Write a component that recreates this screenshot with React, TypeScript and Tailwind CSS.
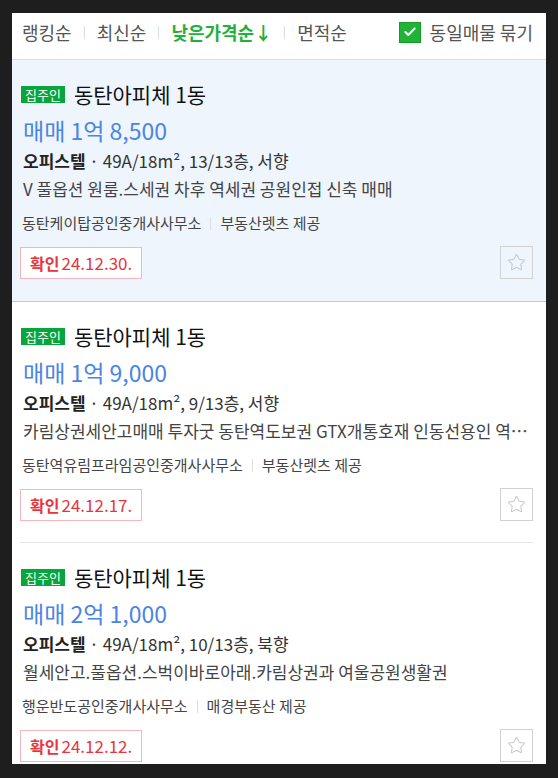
import { Star, Check } from 'lucide-react';

const LISTINGS = [
    {
        name: '동탄아피체 1동',
        price: '매매 1억 8,500',
        spec: '49A/18m², 13/13층, 서향',
        desc: 'V 풀옵션 원룸.스세권 차후 역세권 공원인접 신축 매매',
        agency: '동탄케이탑공인중개사사무소',
        provider: '부동산렛츠 제공',
        date: '24.12.30.',
        active: true,
    },
    {
        name: '동탄아피체 1동',
        price: '매매 1억 9,000',
        spec: '49A/18m², 9/13층, 서향',
        desc: '카림상권세안고매매 투자굿 동탄역도보권 GTX개통호재 인동선용인 역세권 급매',
        agency: '동탄역유림프라임공인중개사사무소',
        provider: '부동산렛츠 제공',
        date: '24.12.17.',
        active: false,
    },
    {
        name: '동탄아피체 1동',
        price: '매매 2억 1,000',
        spec: '49A/18m², 10/13층, 북향',
        desc: '월세안고.풀옵션.스벅이바로아래.카림상권과 여울공원생활권',
        agency: '행운반도공인중개사사무소',
        provider: '매경부동산 제공',
        date: '24.12.12.',
        active: false,
    },
];

const SORTS = ['랭킹순', '최신순', '낮은가격순↓', '면적순'];

type Listing = (typeof LISTINGS)[number];

const Divider = () => <span className="w-px h-[13px] bg-[#dedede]" />;

const ListingCard = ({ item, last }: { item: Listing; last: boolean }) => (
    <div
        className={`relative pl-2 pr-[13px] pt-[22px] pb-[22px] ${
            item.active ? 'bg-[#eef5fd] border-b border-[#b6cbe7]' : 'bg-white'
        }`}
    >
        <div className="flex items-center h-6">
            <span className="h-[17px] px-[4px] flex items-center bg-[#08a43c] text-white text-[13px] leading-none ml-px">
                집주인
            </span>
            <span className="ml-[9px] text-[21px] text-[#111] leading-6">{item.name}</span>
        </div>
        <p className="mt-[9px] pl-[3px] text-[23px] leading-[30px] text-[#4a84e4]">{item.price}</p>
        <p className="mt-[5px] pl-[3px] text-[17px] leading-[22px] text-[#333]">
            <span className="font-bold text-[#222]">오피스텔</span> · {item.spec}
        </p>
        <p className="mt-[5px] pl-[3px] text-[17px] leading-[24px] text-[#444] truncate">{item.desc}</p>
        <div className="mt-[12px] pl-[2px] flex items-center gap-[9px] text-[15px] leading-5 text-[#444]">
            <span>{item.agency}</span>
            <Divider />
            <span>{item.provider}</span>
        </div>
        <div className="mt-[13px] flex items-center justify-between">
            <span className="h-8 px-[9px] flex items-center border border-[#f6b6ba] bg-white text-[#e8353d] text-[17px]">
                <span className="font-bold text-[16px] mr-[2px]">확인</span>
                {item.date}
            </span>
            <button className="w-[33px] h-[33px] flex items-center justify-center border border-[#d2d2d2]">
                <Star size={19} strokeWidth={1.3} className="text-[#c8c8c8]" />
            </button>
        </div>
        {!item.active && !last && (
            <div className="absolute left-2 right-[13px] bottom-0 h-px bg-[#e4e4e4]" />
        )}
    </div>
);

export default function App() {
    return (
        <div
            className="w-full h-[778px] bg-[#1e1e1e] pt-[13px] px-3"
            style={{ fontFamily: '"Noto Sans CJK KR", "Noto Sans", sans-serif' }}
        >
            <div className="h-[751px] bg-white overflow-hidden">
                <div className="h-[47px] flex items-start justify-between pt-[6px] pl-[10px] pr-[13px] border-b border-[#dbe0e6]">
                    <div className="flex items-center gap-3 text-[18px] leading-[26px]">
                        {SORTS.map((s, i) => (
                            <div key={s} className="flex items-center gap-3">
                                {i > 0 && <Divider />}
                                <span className={i === 2 ? 'text-[#1fb13a] font-bold' : 'text-[#555]'}>{s}</span>
                            </div>
                        ))}
                    </div>
                    <label className="flex items-center gap-[9px] text-[18px] leading-[26px] text-[#555]">
                        <span className="w-[22px] h-[21px] flex items-center justify-center bg-[#1fb436] border border-[#169a2a]">
                            <Check size={14} strokeWidth={3.5} className="text-white" />
                        </span>
                        동일매물 묶기
                    </label>
                </div>
                {LISTINGS.map((item, i) => (
                    <ListingCard key={item.date} item={item} last={i === LISTINGS.length - 1} />
                ))}
            </div>
        </div>
    );
}
